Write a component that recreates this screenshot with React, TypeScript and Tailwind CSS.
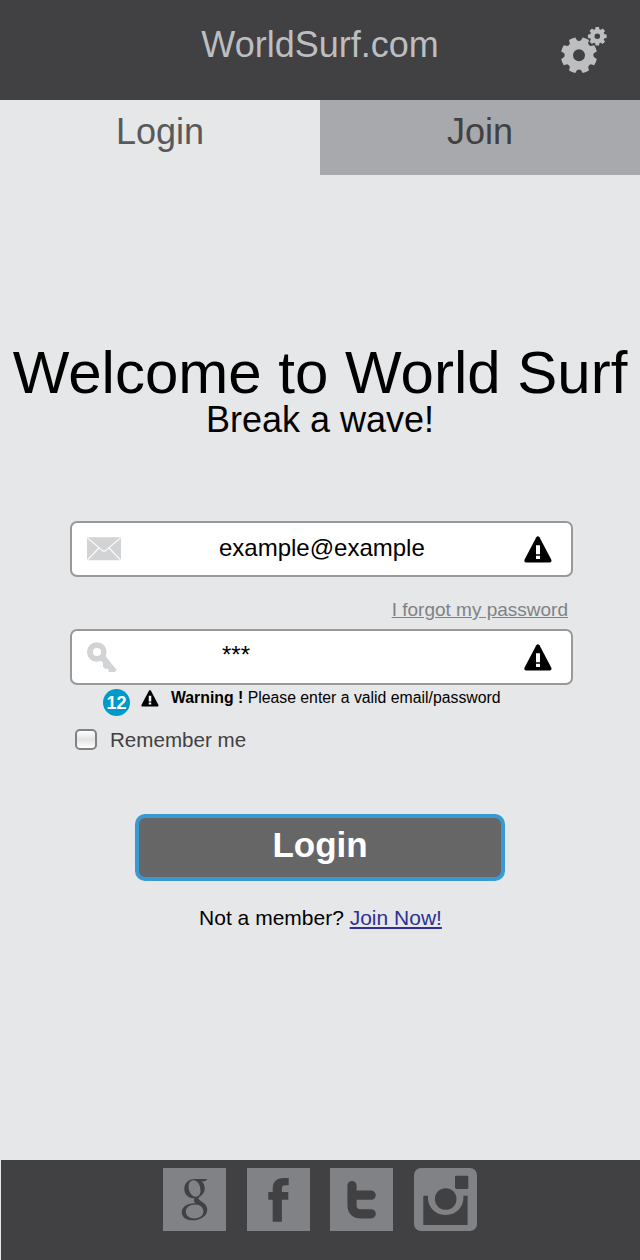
import React from "react";

function gearPath(cx: number, cy: number, outer: number, root: number, teeth: number, offset: number) {
  const step = (Math.PI * 2) / teeth;
  const at = (r: number, a: number) => `${(cx + r * Math.cos(a)).toFixed(2)} ${(cy + r * Math.sin(a)).toFixed(2)}`;
  let d = "";
  for (let i = 0; i < teeth; i++) {
    const a = offset + i * step;
    d += `${i === 0 ? "M" : "L"}${at(root, a - step * 0.34)}`;
    d += `L${at(outer, a - step * 0.24)}`;
    d += `A${outer} ${outer} 0 0 1 ${at(outer, a + step * 0.24)}`;
    d += `L${at(root, a + step * 0.34)}`;
    d += `Q${at(root - outer * 0.06, a + step * 0.5)} ${at(root, a + step * 0.66)}`;
  }
  return d + "Z";
}

function hole(cx: number, cy: number, r: number) {
  return `M${cx - r} ${cy}a${r} ${r} 0 1 0 ${2 * r} 0a${r} ${r} 0 1 0 ${-2 * r} 0Z`;
}

function Gears() {
  return (
    <svg width="48" height="48" viewBox="0 0 48 48" fill="#bcbec0" fillRule="evenodd">
      <path d={gearPath(19, 28.2, 18.2, 14.9, 8, Math.PI / 8) + hole(19, 28.2, 6)} />
      <path d={gearPath(37.3, 9.2, 9.4, 7.5, 8, 0) + hole(37.3, 9.2, 2.8)} />
    </svg>
  );
}

function Envelope() {
  return (
    <svg width="34" height="24" viewBox="0 0 34 24">
      <rect y="0.3" width="34" height="23" rx="1" fill="#d1d3d4" />
      <path d="M.5 .8L15.7 13.8Q17 14.8 18.3 13.8L33.5 .8M.5 22.8L12 11M33.5 22.8L22 11" fill="none" stroke="#fff" strokeWidth="1.1" />
    </svg>
  );
}

function Key() {
  return (
    <svg width="31" height="31" viewBox="0 0 31 31" fill="#d1d3d4">
      <path fillRule="evenodd" d={hole(9.8, 10, 9.8) + hole(10, 10, 4.1)} />
      <path d="M18.6 13.5L19.8 15.8L29.9 28.3L27.5 30H21.7V28.2L20.7 26.6L18.6 27L16 24.7V20.5L13.5 18.6Z" />
    </svg>
  );
}

function Alert({ className }: { className: string }) {
  return (
    <svg className={className} viewBox="0 0 28 27">
      <path d="M12.3 1.2Q13.9 -.9 15.5 1.2L27.2 23.6Q28.2 26.4 25.8 26.4H2Q-.4 26.4 .6 23.6Z" fill="#000" />
      <path d="M12 9.3H16V18.2H12ZM12 19.8H16V23H12Z" fill="#fff" />
    </svg>
  );
}

function Field({ icon, children }: { icon: React.ReactNode; children: React.ReactNode }) {
  return (
    <div className="flex h-14 w-[503px] items-center rounded-[7px] border-2 border-[#999] bg-white pr-[19px] pl-[15px]">
      <div className="w-[132px] shrink-0">{icon}</div>
      {children}
      <Alert className="ml-auto h-[27px] w-7" />
    </div>
  );
}

function Tile({ children, className = "" }: { children: React.ReactNode; className?: string }) {
  return (
    <svg width="63" height="63" viewBox="0 0 63 63" className={`bg-[#808285] ${className}`} fill="#414042">
      {children}
    </svg>
  );
}

export default function App() {
  return (
    <div className="flex h-[1260px] w-[640px] flex-col overflow-hidden bg-[#e6e7e8] font-['Liberation_Sans',Arial,sans-serif] whitespace-nowrap text-black">
      <header className="grid h-[100px] shrink-0 grid-cols-[1fr_auto_1fr] bg-[#414042]">
        <h1 className="col-start-2 text-[36px] leading-[89px] text-[#bcbec0]">WorldSurf.com</h1>
        <div className="flex justify-end pt-[27px] pr-8">
          <Gears />
        </div>
      </header>
      <nav className="grid h-[75px] shrink-0 grid-cols-2 text-center text-[36px] leading-[64px]">
        <a className="text-[#58595b]">Login</a>
        <a className="bg-[#a7a9ac] text-[#414042]">Join</a>
      </nav>

      <main className="flex h-[985px] shrink-0 flex-col pt-[169px]">
        <h2 className="text-center text-[60px] leading-[58px]">Welcome to World Surf</h2>
        <p className="text-center text-[36px] leading-9">Break a wave!</p>

        <div className="mt-[83px] ml-[70px] w-[503px]">
          <Field icon={<Envelope />}>
            <span className="pb-[3px] text-[24px] leading-7">example@example</span>
          </Field>
          <a className="mt-[23px] mr-[5px] block text-right text-[19px] leading-5 text-[#808285] underline">I forgot my password</a>
          <div className="mt-[9px]">
            <Field icon={<Key />}>
              <span className="ml-[3px] pb-[5px] text-[24px] leading-7">***</span>
            </Field>
          </div>
          <div className="mt-[4px] flex h-[27px] items-start pl-[33px]">
            <span className="h-[27px] w-[27px] rounded-full bg-[#0099cc] text-center text-[18px] leading-[28px] font-bold text-white">12</span>
            <Alert className="mt-px ml-[11px] h-[17px] w-[18px]" />
            <p className="ml-[12px] text-[15.8px] leading-[17px]">
              <b>Warning !</b> Please enter a valid email/password
            </p>
          </div>
          <div className="mt-[13px] ml-[5px] flex h-[21px] items-center">
            <span className="h-[21px] w-[22px] rounded-[5px] border-2 border-[#808285] bg-linear-to-b from-white via-[#e3e3e4] to-white" />
            <span className="ml-[13px] text-[20.6px] leading-[21px] text-[#414042]">Remember me</span>
          </div>
        </div>

        <button className="mt-[64px] ml-[135px] h-[67px] w-[370px] rounded-[10px] border-4 border-[#3999d3] bg-[#666] pb-[6px] text-[35px] leading-[53px] font-bold text-white">
          Login
        </button>
        <p className="mt-[25px] pl-px text-center text-[21px] leading-6">
          Not a member? <a className="text-[#2e3192] underline">Join Now!</a>
        </p>
      </main>

      <footer className="ml-px flex h-[100px] shrink-0 gap-[20.7px] bg-[#414042] pt-2 pl-[162px]">
        <Tile>
          <path
            fillRule="evenodd"
            d="M31.3 11C25.2 11 21.3 15.5 21.3 21C21.3 26.8 25.5 30.3 31.6 30.3C30.4 32 30.7 33.6 32.4 35.2C23 35 18.7 39.5 18.7 44.2C18.7 49.4 23.5 52.3 29.6 52.3C38 52.3 44.2 47.8 44.2 41.7C44.2 37.7 41.7 35.7 38.9 33.7L36.4 31.8C35 30.6 35.3 29.7 37 28.5C40 26.6 41.7 24 41.7 20.5C41.7 17.2 40.5 14.8 38.6 13.3H42L44.5 11ZM30.5 12.3C34.8 12.3 37.5 17.6 37.5 22.7C37.5 26.5 35.4 28.7 32.7 28.7C28.5 28.7 25.6 23.6 25.6 18.5C25.6 14.8 27.6 12.3 30.5 12.3ZM32.6 36.5C37 36.5 40.4 39.5 40.4 43.6C40.4 47.8 36.6 50.4 31.6 50.4C26.2 50.4 22.8 47.6 22.8 43.5C22.8 39.3 26.8 36.5 32.6 36.5Z"
          />
        </Tile>
        <Tile>
          <path d="M25.7 53.7V31.7H21.3V24H25.7V21C25.7 13.5 30 10 36.5 10H41.7V17.3H38.5C36 17.3 34.9 18.5 34.9 20.5V24H41.3V31.7H34.9V53.7Z" />
        </Tile>
        <Tile>
          <path d="M22 17.5V37Q22 45.8 31 45.8H41.2M22 27.2H41.2" fill="none" stroke="#414042" strokeWidth="9.2" strokeLinecap="round" />
        </Tile>
        <Tile className="rounded-[7px]">
          <rect x="41" y="7.7" width="13.3" height="13.2" rx="1.3" />
          <circle cx="31.7" cy="31" r="10.8" />
          <path d="M9.3 27.8H14.1C13 38 20.5 47 31.7 47S50.4 38 49.3 27.8H53.6V57H9.3Z" />
        </Tile>
      </footer>
    </div>
  );
}
